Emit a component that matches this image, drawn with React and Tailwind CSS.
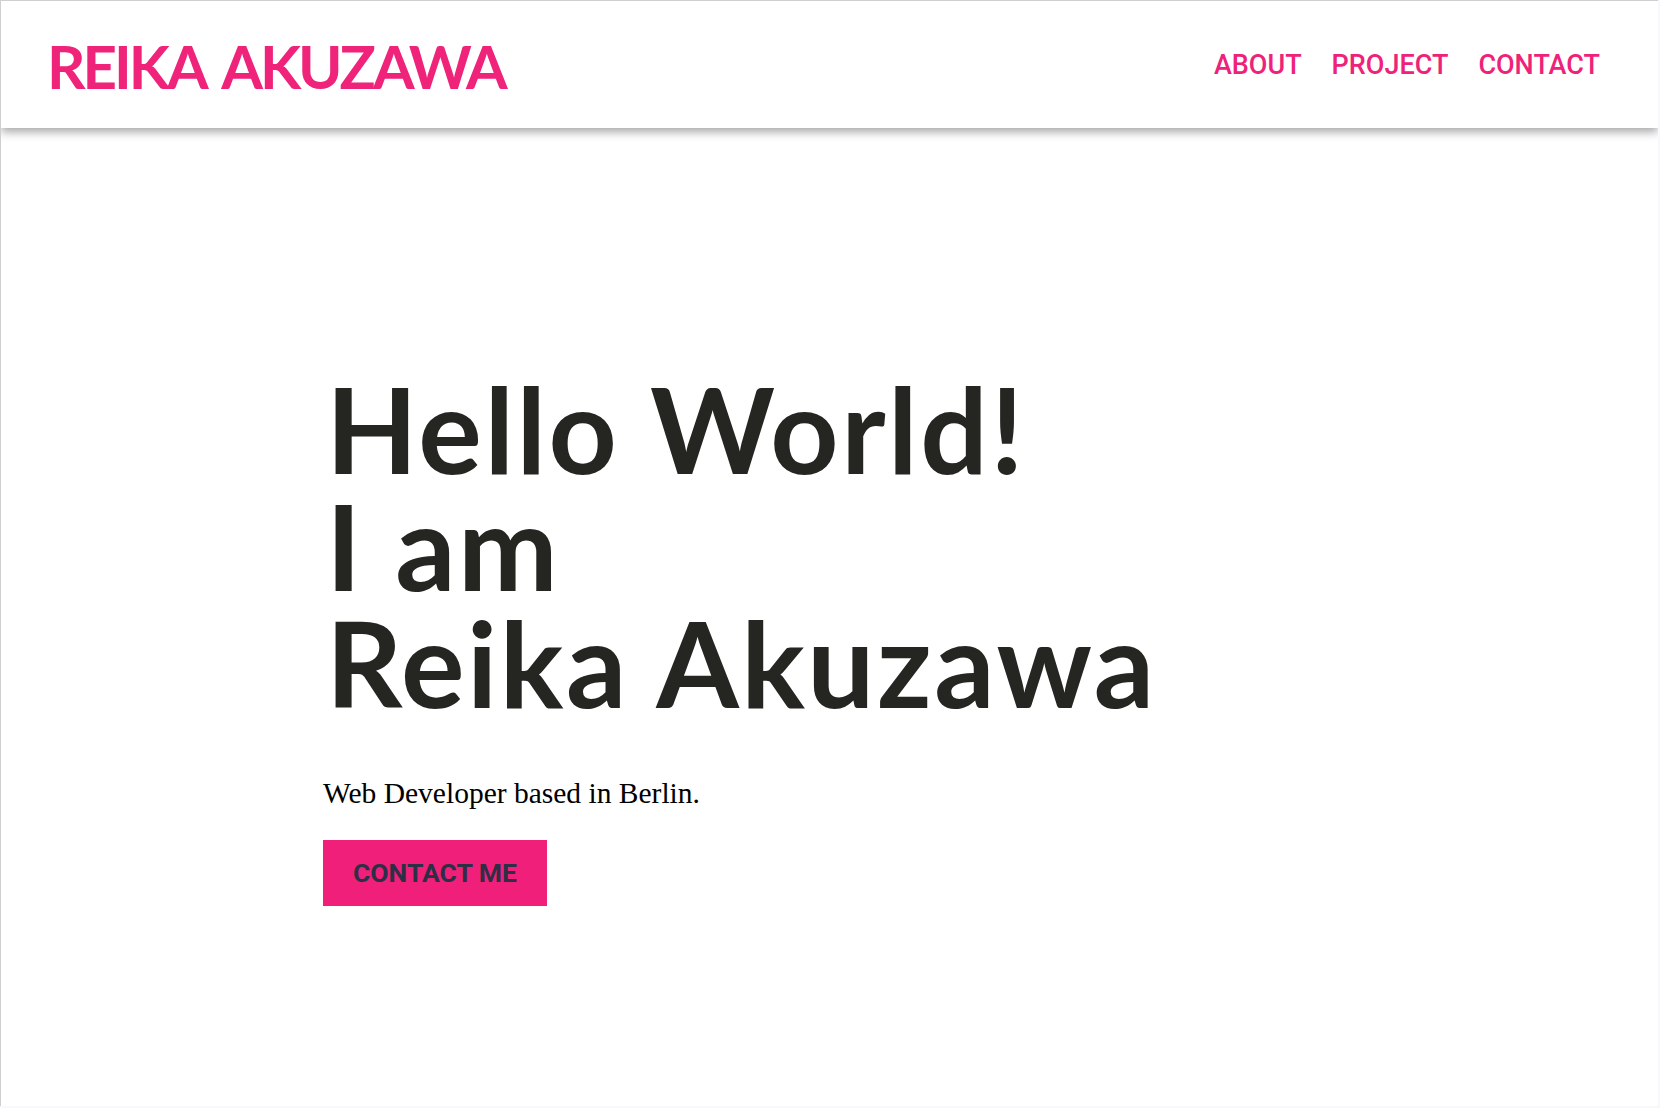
import React from "react";

export default function App() {
  return (
    <div className="min-h-[1108px] w-full bg-[#f7f7fc]">
      <div className="w-[1658px] h-[1106px] border-l border-t border-[#cfcfcf] bg-white overflow-hidden">
        <header className="relative z-10 h-[127px] flex items-center justify-between pl-[46px] pr-[58px] bg-white shadow-[0_4px_9px_rgba(0,0,0,0.35)]">
          <div className="font-['Lato',sans-serif] font-bold text-[60px] leading-none tracking-[-3px] [word-spacing:8px] text-[#ef2379] pt-[3px]">
            REIKA AKUZAWA
          </div>
          <nav className="flex items-center gap-[30px] font-['Roboto',sans-serif] font-medium text-[27px] leading-none text-[#ee2279] pt-[2px]">
            <a>ABOUT</a>
            <a>PROJECT</a>
            <a>CONTACT</a>
          </nav>
        </header>
        <main className="pl-[322px] pt-[242px]">
          <h1 className="ml-[3px] font-['Lato',sans-serif] font-bold text-[119px] leading-[117px] tracking-[2.5px] text-[#252522]">
            Hello World!
            <br />
            I am
            <br />
            Reika Akuzawa
          </h1>
          <p className="mt-[56px] font-['Liberation_Serif',serif] text-[29.5px] leading-[32px] text-black">
            Web Developer based in Berlin.
          </p>
          <button className="mt-[31px] h-[66px] px-[30px] flex items-center bg-[#f0207a] font-['Roboto',sans-serif] font-bold text-[26.5px] leading-none text-[#2d2f45]">
            CONTACT ME
          </button>
        </main>
      </div>
    </div>
  );
}
